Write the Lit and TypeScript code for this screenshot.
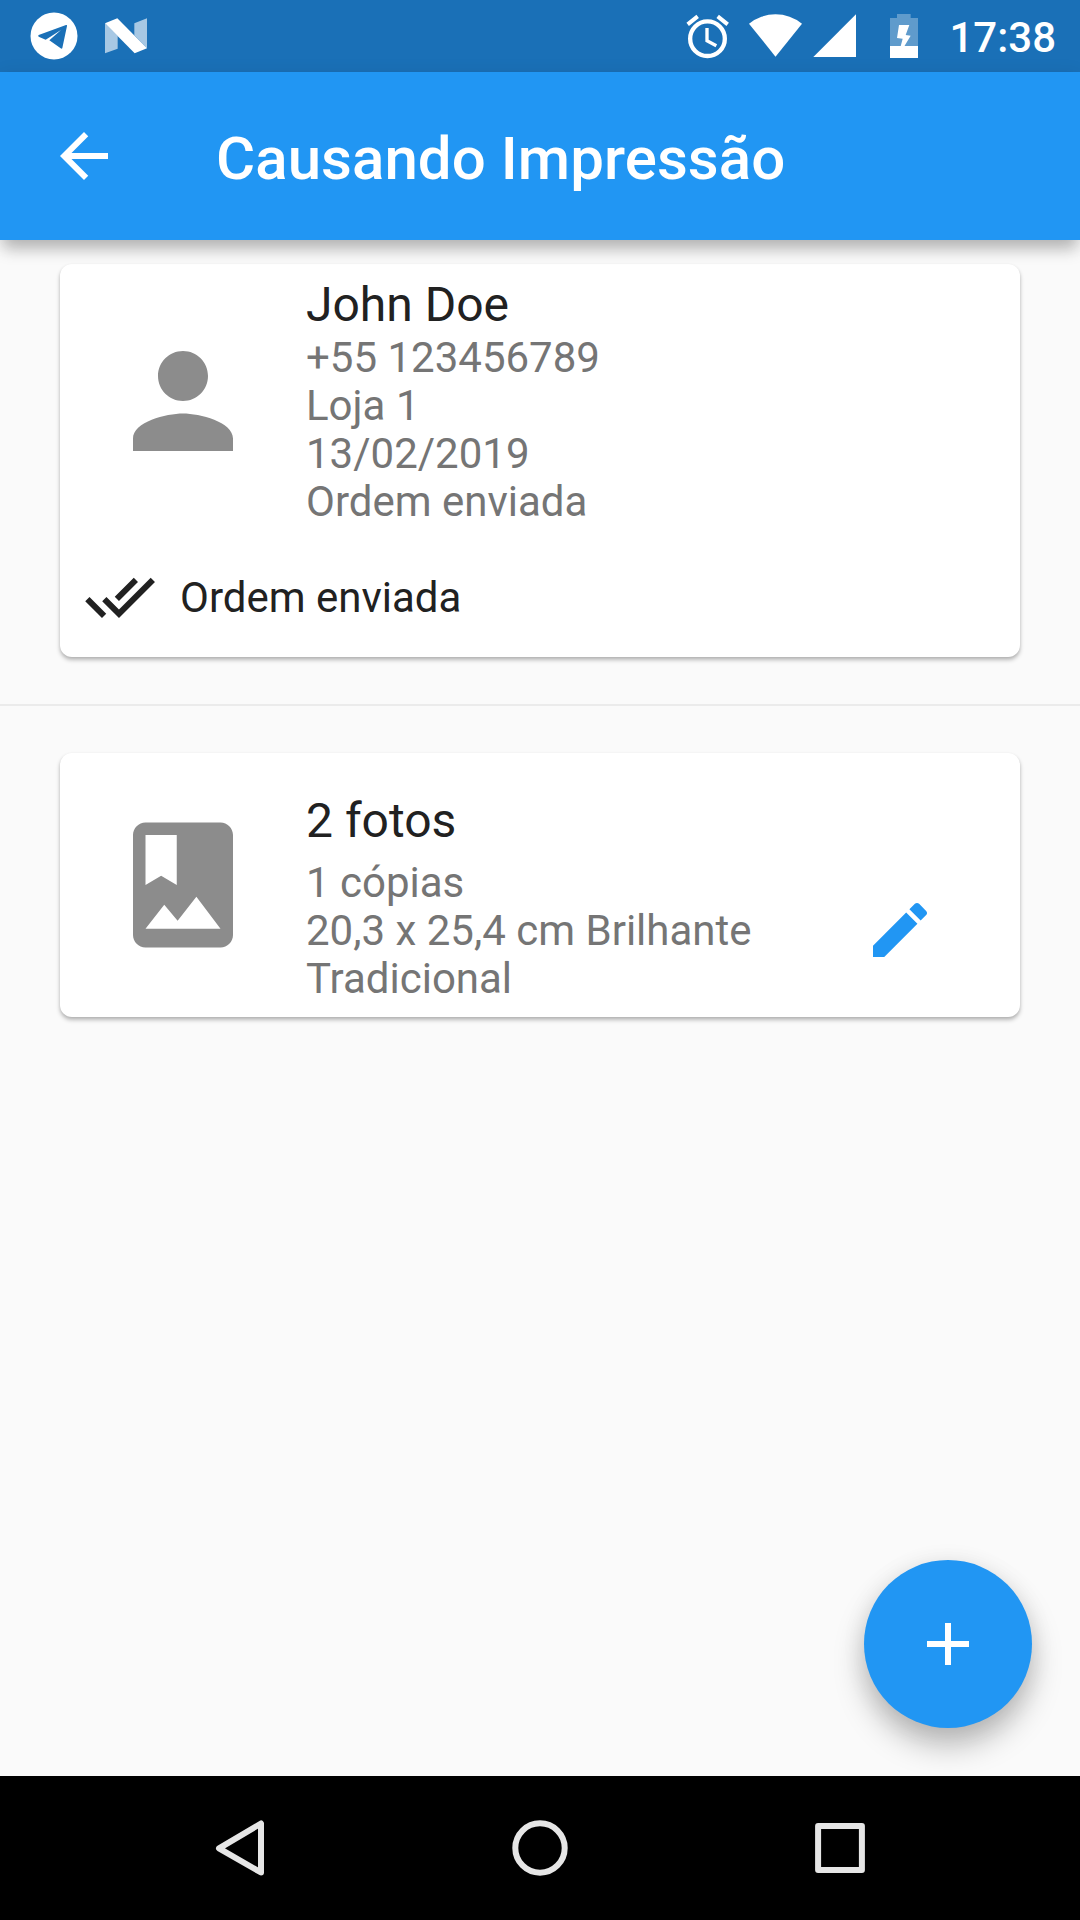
import { LitElement, html, css, svg } from "lit";
import { customElement, property } from "lit/decorators.js";

const glyphs: Record<string, string> = {
  back: "M20 11H7.83l5.59-5.59L12 4l-8 8 8 8 1.41-1.41L7.83 13H20v-2z",
  person:
    "M12 12c2.21 0 4-1.79 4-4s-1.79-4-4-4-4 1.79-4 4 1.79 4 4 4zm0 2c-2.67 0-8 1.34-8 4v2h16v-2c0-2.66-5.33-4-8-4z",
  album:
    "M18 2H6c-1.1 0-2 .9-2 2v16c0 1.1.9 2 2 2h12c1.1 0 2-.9 2-2V4c0-1.1-.9-2-2-2zM6 4h5v8l-2.5-1.5L6 12V4zm0 15l3-3.86 2.14 2.58 3-3.86L18 19H6z",
  doneAll:
    "M18 7l-1.41-1.41-6.34 6.34 1.41 1.41L18 7zm4.24-1.41L11.66 16.17 7.48 12l-1.41 1.41L11.66 19l12-12-1.42-1.41zM.41 13.41L6 19l1.41-1.41L1.83 12 .41 13.41z",
  edit: "M3 17.25V21h3.75L17.81 9.94l-3.75-3.75L3 17.25zM20.71 7.04c.39-.39.39-1.02 0-1.41l-2.34-2.34c-.39-.39-1.02-.39-1.41 0l-1.83 1.83 3.75 3.75 1.83-1.83z",
  add: "M19 13h-6v6h-2v-6H5v-2h6V5h2v6h6v2z",
};

@customElement("md-icon")
export class MdIcon extends LitElement {
  @property() name = "";
  static styles = css`
    :host {
      display: block;
      flex: none;
      width: 72px;
      height: 72px;
    }
    svg {
      display: block;
      width: 100%;
      height: 100%;
      fill: currentColor;
    }
  `;
  render() {
    return html`<svg viewBox="0 0 24 24">${svg`<path d=${glyphs[this.name] ?? ""}></path>`}</svg>`;
  }
}

@customElement("status-bar")
export class StatusBar extends LitElement {
  static styles = css`
    :host {
      display: flex;
      align-items: center;
      height: 72px;
      padding: 0 24px 0 30px;
      box-sizing: border-box;
      background: #1a70b7;
      color: #fff;
    }
    svg {
      display: block;
      height: 48px;
      fill: #fff;
    }
    .notifications {
      display: flex;
      gap: 24px;
      flex: 1;
    }
    .system {
      display: flex;
      align-items: center;
    }
    .square {
      width: 48px;
    }
    .alarm {
      width: 45px;
      margin-right: 18px;
    }
    .wifi {
      width: 55px;
      margin-right: 10px;
    }
    .signal {
      width: 44px;
      margin-right: 32px;
    }
    .battery {
      width: 30px;
      margin-right: 30px;
    }
    .line {
      fill: none;
      stroke: #fff;
    }
    .faint {
      fill: #fff;
      fill-opacity: 0.62;
    }
    .empty {
      fill: #fff;
      fill-opacity: 0.3;
    }
    .cut {
      fill: #1a70b7;
    }
    .time {
      font-size: 42px;
      font-weight: 500;
      line-height: 48px;
      padding-top: 3px;
    }
  `;
  render() {
    return html`
      <div class="notifications">
        <svg class="square" viewBox="90 36 144 144">
          <circle cx="162" cy="108" r="70.5"></circle>
          <path class="cut" d="M116 105L198 75Q202 74 201 78L187 144Q186 148 182 145L148 121L183 90L137 119L116 110Q113 107 116 105z"></path>
        </svg>
        <svg class="square" viewBox="306 36 144 144">
          <path class="faint" d="M315 70L353 108V146L315 160zM403 70L441 55V145L403 106z"></path>
          <path d="M315 70L352 55L441 145L404 160z"></path>
        </svg>
      </div>
      <div class="system">
        <svg class="alarm" viewBox="75 36 135 144">
          <circle class="line" cx="142.5" cy="116" r="52" stroke-width="13"></circle>
          <path class="line" stroke-width="10" d="M141 84V122L169 137"></path>
          <path class="line" stroke-width="12" d="M83 73L113 49M173 49L203 73"></path>
        </svg>
        <svg class="wifi" viewBox="264 36 165 144">
          <path d="M267 71A127 127 0 0 1 426 71L346.500 170z"></path>
        </svg>
        <svg class="signal" viewBox="459 36 132 144">
          <path d="M460 171L588 43V171z"></path>
        </svg>
        <svg class="battery" viewBox="687 36 90 144">
          <path class="empty" d="M711 42H752V54H774V138H690V54H711z"></path>
          <path d="M690 138H774V174H690z"></path>
          <path d="M717 75H748L737 105L752 107L733 139H722L728 116L711 114z"></path>
        </svg>
        <div class="time">17:38</div>
      </div>
    `;
  }
}

@customElement("nav-bar")
export class NavBar extends LitElement {
  static styles = css`
    :host {
      display: flex;
      align-items: center;
      justify-content: center;
      gap: 228px;
      height: 144px;
      background: #000;
    }
    svg {
      display: block;
      width: 72px;
      height: 72px;
      fill: none;
      stroke: #e6e6e6;
      stroke-width: 6;
      stroke-linejoin: round;
    }
  `;
  render() {
    return html`
      <svg viewBox="0 0 72 72"><path d="M57 11.500V60.500L15 36.300z"></path></svg>
      <svg viewBox="0 0 72 72"><circle cx="36" cy="36" r="24.700"></circle></svg>
      <svg viewBox="0 0 72 72"><rect x="14.100" y="14.100" width="43.800" height="43.800"></rect></svg>
    `;
  }
}

@customElement("app-root")
export class AppRoot extends LitElement {
  static styles = css`
    :host {
      display: block;
      font-family: Roboto, "Liberation Sans", sans-serif;
    }
    .screen {
      position: relative;
      display: flex;
      flex-direction: column;
      width: 1080px;
      height: 1920px;
      overflow: hidden;
      background: #fafafa;
    }
    .appbar {
      display: flex;
      align-items: center;
      height: 168px;
      padding: 0 48px;
      box-sizing: border-box;
      gap: 96px;
      background: #2196f3;
      color: #fff;
      z-index: 1;
      box-shadow: 0 12px 15px -3px rgba(0, 0, 0, 0.24), 0 3px 18px rgba(0, 0, 0, 0.09);
    }
    .title {
      margin: 0;
      font-size: 60px;
      font-weight: 500;
      line-height: 70px;
      letter-spacing: 0.06px;
      padding-top: 6px;
    }
    .content {
      flex: 1;
      padding-top: 24px;
    }
    .card {
      margin: 0 60px;
      border-radius: 12px;
      background: #fff;
      box-sizing: border-box;
      box-shadow: 0 3px 4px rgba(0, 0, 0, 0.26), 0 1px 3px rgba(0, 0, 0, 0.07);
    }
    .order {
      height: 393px;
      padding: 11px 24px 0;
    }
    .photos {
      height: 264px;
      padding: 40px 84px 0 24px;
    }
    .tile {
      display: flex;
      align-items: flex-start;
    }
    .leading {
      width: 150px;
      height: 150px;
      margin: 0 48px 0 24px;
      color: #8c8c8c;
    }
    .order .leading {
      margin-top: 51px;
    }
    .photos .leading {
      margin-top: 17px;
    }
    .text {
      flex: 1;
    }
    .name {
      font-size: 48px;
      line-height: 59px;
      color: #212121;
    }
    .photos .name {
      line-height: 56px;
      margin-bottom: 10px;
    }
    .detail {
      font-size: 42px;
      line-height: 48px;
      color: #757575;
    }
    .status {
      display: flex;
      align-items: center;
      gap: 24px;
      margin-top: 35px;
      color: #212121;
      font-size: 42px;
      line-height: 48px;
    }
    .status span {
      padding-top: 2px;
    }
    .divider {
      height: 2px;
      margin: 47px 0;
      background: #ebebeb;
    }
    .edit {
      margin-top: 101px;
      color: #2196f3;
    }
    .fab {
      position: absolute;
      right: 48px;
      bottom: 192px;
      display: flex;
      align-items: center;
      justify-content: center;
      width: 168px;
      height: 168px;
      padding: 0;
      border: 0;
      border-radius: 50%;
      background: #2196f3;
      color: #fff;
      box-shadow: 0 18px 30px rgba(0, 0, 0, 0.25), 0 3px 24px rgba(0, 0, 0, 0.08);
    }
    nav-bar {
      position: relative;
    }
  `;

  private contact = ["+55 123456789", "Loja 1", "13/02/2019", "Ordem enviada"];
  private prints = ["1 cópias", "20,3 x 25,4 cm Brilhante", "Tradicional"];

  private details(lines: string[]) {
    return lines.map((line) => html`<div class="detail">${line}</div>`);
  }

  render() {
    return html`
      <div class="screen">
        <status-bar></status-bar>
        <header class="appbar">
          <md-icon name="back"></md-icon>
          <h1 class="title">Causando Impressão</h1>
        </header>
        <main class="content">
          <section class="card order">
            <div class="tile">
              <md-icon class="leading" name="person"></md-icon>
              <div class="text">
                <div class="name">John Doe</div>
                ${this.details(this.contact)}
              </div>
            </div>
            <div class="status">
              <md-icon name="doneAll"></md-icon>
              <span>Ordem enviada</span>
            </div>
          </section>
          <div class="divider"></div>
          <section class="card photos">
            <div class="tile">
              <md-icon class="leading" name="album"></md-icon>
              <div class="text">
                <div class="name">2 fotos</div>
                ${this.details(this.prints)}
              </div>
              <md-icon class="edit" name="edit"></md-icon>
            </div>
          </section>
        </main>
        <button class="fab" aria-label="+"><md-icon name="add"></md-icon></button>
        <nav-bar></nav-bar>
      </div>
    `;
  }
}
